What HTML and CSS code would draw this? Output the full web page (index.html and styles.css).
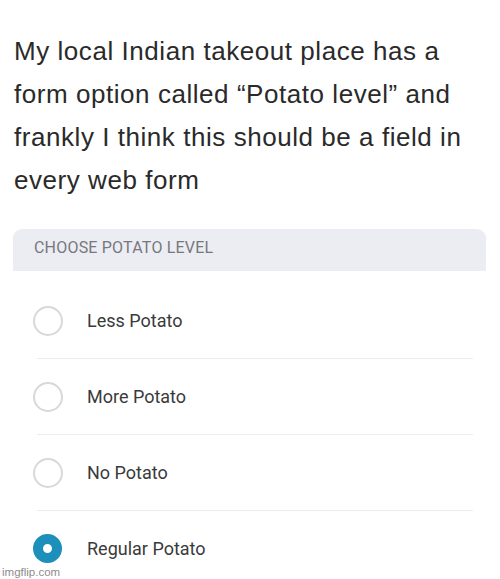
FILE: index.html
```html
<!DOCTYPE html>
<html lang="en">
<head>
    <meta charset="UTF-8">
    <meta name="viewport" content="width=device-width, initial-scale=1.0">
    <title>Potato level</title>
    <link rel="stylesheet" href="styles.css">
</head>
<body>
    <div class="post">
        <p class="tweet">My local Indian takeout place has a<br>form option called “Potato level” and<br>frankly I think this should be a field in<br>every web form</p>

        <div class="field-head">CHOOSE POTATO LEVEL</div>
        <ul class="options">
            <li class="option"><span class="radio"></span>Less Potato</li>
            <li class="option"><span class="radio"></span>More Potato</li>
            <li class="option"><span class="radio"></span>No Potato</li>
            <li class="option last"><span class="radio on"></span>Regular Potato</li>
        </ul>
    </div>
    <span class="mark">imgflip.com</span>
</body>
</html>
```

FILE: styles.css
```css
body {
    margin: 0;
    background: #fff;
    width: 500px;
    height: 579px;
    overflow: hidden;
    position: relative;
}
.post {
    padding-top: 30px;
}
.tweet {
    margin: 0 0 27px 14px;
    width: 486px;
    white-space: nowrap;
    font-family: "Liberation Sans", Arial, sans-serif;
    font-size: 26px;
    line-height: 43px;
    color: #2a2a2a;
    letter-spacing: 0.55px;
}
.field-head {
    margin-left: 13px;
    width: 452px;
    height: 42px;
    padding-left: 21px;
    background: #ecedf3;
    border-radius: 9px 9px 0 0;
    font-family: Roboto, "Liberation Sans", sans-serif;
    font-size: 16px;
    letter-spacing: 0.2px;
    line-height: 38px;
    color: #77777d;
}
.options {
    list-style: none;
    margin: 12px 0 0 37px;
    padding: 0;
    width: 436px;
}
.option {
    display: flex;
    align-items: center;
    height: 75px;
    border-bottom: 1px solid #ececec;
    font-family: Roboto, "Liberation Sans", sans-serif;
    font-size: 18px;
    color: #3a3a3a;
}
.option.last {
    border-bottom: none;
}
.radio {
    box-sizing: border-box;
    width: 30px;
    height: 30px;
    margin-left: -4px;
    margin-right: 24px;
    border: 2px solid #d8d8d8;
    border-radius: 50%;
}
.radio.on {
    width: 29px;
    height: 29px;
    margin-left: -4px;
    margin-right: 25px;
    border: 10px solid #1c8fbb;
    background: #fff;
}
.mark {
    position: absolute;
    left: 2px;
    bottom: 1px;
    font-family: "Liberation Sans", Arial, sans-serif;
    font-size: 11.5px;
    color: #8c8c8c;
}
```
